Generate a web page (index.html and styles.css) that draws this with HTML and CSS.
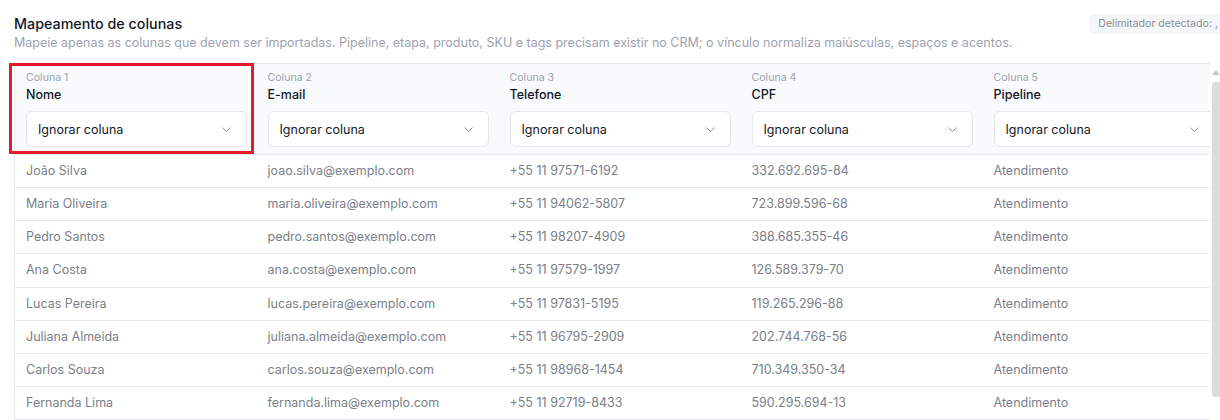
FILE: index.html
```html
<!DOCTYPE html>
<html lang="pt-BR">
<head>
    <meta charset="UTF-8">
    <meta name="viewport" content="width=device-width, initial-scale=1.0">
    <title>Importar contatos - Mapeamento</title>
    <link rel="stylesheet" href="styles.css">
</head>
<body>
    <section class="mapping">
        <div class="mapping-head">
            <div>
                <h2 class="mapping-title">Mapeamento de colunas</h2>
                <p class="mapping-hint">Mapeie apenas as colunas que devem ser importadas. Pipeline, etapa, produto, SKU e tags precisam existir no CRM; o vínculo normaliza maiúsculas, espaços e acentos.</p>
            </div>
            <span class="badge">Delimitador detectado: ,</span>
        </div>

        <div class="grid-area">
            <div class="grid-scroll">
                <table class="preview">
                    <thead>
                        <tr>
                            <th>
                                <div class="col-index">Coluna 1</div>
                                <div class="col-name">Nome</div>
                                <div class="fake-select"><span>Ignorar coluna</span><svg width="9" height="5" viewBox="0 0 9 5"><path d="M0.5 0.5 L4.5 4.5 L8.5 0.5" fill="none" stroke="#8b9099" stroke-width="1"/></svg></div>
                            </th>
                            <th>
                                <div class="col-index">Coluna 2</div>
                                <div class="col-name">E-mail</div>
                                <div class="fake-select"><span>Ignorar coluna</span><svg width="9" height="5" viewBox="0 0 9 5"><path d="M0.5 0.5 L4.5 4.5 L8.5 0.5" fill="none" stroke="#8b9099" stroke-width="1"/></svg></div>
                            </th>
                            <th>
                                <div class="col-index">Coluna 3</div>
                                <div class="col-name">Telefone</div>
                                <div class="fake-select"><span>Ignorar coluna</span><svg width="9" height="5" viewBox="0 0 9 5"><path d="M0.5 0.5 L4.5 4.5 L8.5 0.5" fill="none" stroke="#8b9099" stroke-width="1"/></svg></div>
                            </th>
                            <th>
                                <div class="col-index">Coluna 4</div>
                                <div class="col-name">CPF</div>
                                <div class="fake-select"><span>Ignorar coluna</span><svg width="9" height="5" viewBox="0 0 9 5"><path d="M0.5 0.5 L4.5 4.5 L8.5 0.5" fill="none" stroke="#8b9099" stroke-width="1"/></svg></div>
                            </th>
                            <th>
                                <div class="col-index">Coluna 5</div>
                                <div class="col-name">Pipeline</div>
                                <div class="fake-select"><span>Ignorar coluna</span><svg width="9" height="5" viewBox="0 0 9 5"><path d="M0.5 0.5 L4.5 4.5 L8.5 0.5" fill="none" stroke="#8b9099" stroke-width="1"/></svg></div>
                            </th>
                            <th>
                                <div class="col-index">Coluna 6</div>
                                <div class="col-name">Etapa</div>
                                <div class="fake-select"><span>Ignorar coluna</span><svg width="9" height="5" viewBox="0 0 9 5"><path d="M0.5 0.5 L4.5 4.5 L8.5 0.5" fill="none" stroke="#8b9099" stroke-width="1"/></svg></div>
                            </th>
                        </tr>
                    </thead>
                    <tbody>
                        <tr><td>João Silva</td><td>joao.silva@exemplo.com</td><td>+55 11 97571-6192</td><td>332.692.695-84</td><td>Atendimento</td><td>Novo contato</td></tr>
                        <tr><td>Maria Oliveira</td><td>maria.oliveira@exemplo.com</td><td>+55 11 94062-5807</td><td>723.899.596-68</td><td>Atendimento</td><td>Novo contato</td></tr>
                        <tr><td>Pedro Santos</td><td>pedro.santos@exemplo.com</td><td>+55 11 98207-4909</td><td>388.685.355-46</td><td>Atendimento</td><td>Novo contato</td></tr>
                        <tr><td>Ana Costa</td><td>ana.costa@exemplo.com</td><td>+55 11 97579-1997</td><td>126.589.379-70</td><td>Atendimento</td><td>Em andamento</td></tr>
                        <tr><td>Lucas Pereira</td><td>lucas.pereira@exemplo.com</td><td>+55 11 97831-5195</td><td>119.265.296-88</td><td>Atendimento</td><td>Novo contato</td></tr>
                        <tr><td>Juliana Almeida</td><td>juliana.almeida@exemplo.com</td><td>+55 11 96795-2909</td><td>202.744.768-56</td><td>Atendimento</td><td>Em andamento</td></tr>
                        <tr><td>Carlos Souza</td><td>carlos.souza@exemplo.com</td><td>+55 11 98968-1454</td><td>710.349.350-34</td><td>Atendimento</td><td>Novo contato</td></tr>
                        <tr><td>Fernanda Lima</td><td>fernanda.lima@exemplo.com</td><td>+55 11 92719-8433</td><td>590.295.694-13</td><td>Atendimento</td><td>Novo contato</td></tr>
                        <tr><td>Rafael Gomes</td><td>rafael.gomes@exemplo.com</td><td>+55 11 93402-1187</td><td>451.820.117-09</td><td>Atendimento</td><td>Em andamento</td></tr>
                    </tbody>
                </table>
            </div>
            <!-- trilho da rolagem vertical -->
            <div class="scroll-rail">
                <span class="rail-arrow"></span>
                <span class="rail-thumb"></span>
            </div>
            <!-- destaque da coluna selecionada -->
            <div class="focus-ring"></div>
        </div>
    </section>
</body>
</html>
```

FILE: styles.css
```css
* {
    margin: 0;
    padding: 0;
    box-sizing: border-box;
}

body {
    font-family: Inter, 'Noto Sans', sans-serif;
    background-color: #fff;
    color: #111827;
    overflow: hidden;
}

.mapping {
    width: 1226px;
    padding: 14px 0 0 14px;
}

.mapping-head {
    display: flex;
    justify-content: space-between;
    align-items: flex-start;
    margin-bottom: 11px;
}

.mapping-title {
    font-size: 14.3px;
    font-weight: 500;
    line-height: 20px;
    color: #111827;
}

.mapping-hint {
    font-size: 12.5px;
    line-height: 18px;
    color: #9ca3af;
}

.badge {
    display: inline-block;
    padding: 3px 8px 3px 9px;
    font-size: 10.6px;
    line-height: 14px;
    color: #8b9099;
    background: #f5f6f7;
    border-radius: 6px;
}

.grid-area {
    position: relative;
    display: flex;
    width: 1208px;
    height: 440px;
}

.grid-scroll {
    width: 1196px;
    overflow: hidden;
}

.scroll-rail {
    width: 12px;
    display: flex;
    flex-direction: column;
    align-items: center;
    padding-top: 7px;
    background: #fff;
}

.rail-arrow {
    width: 0;
    height: 0;
    border-left: 4px solid transparent;
    border-right: 4px solid transparent;
    border-bottom: 5px solid #c8c8c8;
}

.rail-thumb {
    width: 9px;
    height: 315px;
    margin-top: 7px;
    background: #dcdcdc;
    border-radius: 3px;
}

.preview {
    border-collapse: collapse;
    table-layout: fixed;
    width: 1452px;
    border-top: 1px solid #e5e9f0;
    border-left: 1px solid #e5e9f0;
}

.preview th,
.preview td {
    width: 242px;
    text-align: left;
    vertical-align: top;
}

.preview th {
    background: #f8fafc;
    padding: 6px 10px 7px 11px;
    border-bottom: 1px solid #e5e9f0;
    font-weight: normal;
}

.col-index {
    font-size: 10.6px;
    line-height: 15px;
    color: #9ca3af;
}

.col-name {
    font-size: 12.5px;
    line-height: 19px;
    font-weight: 500;
    color: #111827;
    margin-bottom: 7px;
}

.fake-select {
    display: flex;
    align-items: center;
    justify-content: space-between;
    height: 36px;
    padding: 0 15px 0 11px;
    background: #fff;
    border: 1px solid #e5e7eb;
    border-radius: 6px;
    font-size: 12.5px;
    color: #111827;
}

.preview td {
    padding: 7px 11px;
    font-size: 12.5px;
    line-height: 18.15px;
    color: #7b808a;
    border-bottom: 1px solid #e5e9f0;
    white-space: nowrap;
}

.focus-ring {
    position: absolute;
    left: -5px;
    top: 0;
    width: 245px;
    height: 91px;
    border: 3px solid #e41b2b;
    pointer-events: none;
}
```
